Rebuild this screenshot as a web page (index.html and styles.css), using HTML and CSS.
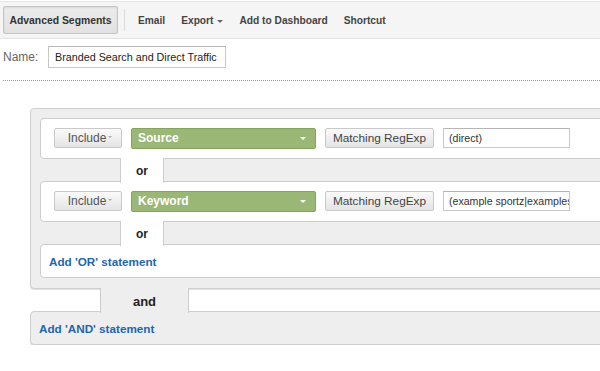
FILE: index.html
```html
<!DOCTYPE html>
<html>
<head>
<meta charset="utf-8">
<link rel="stylesheet" href="styles.css">
</head>
<body>
<div class="toolbar">
  <div class="seg-btn">Advanced Segments</div>
  <div class="sep"></div>
  <a class="tool">Email</a>
  <a class="tool">Export <span class="caret"></span></a>
  <a class="tool">Add to Dashboard</a>
  <a class="tool">Shortcut</a>
</div>
<div class="name-row">
  <span class="name-label">Name:</span>
  <div class="name-input">Branded Search and Direct Traffic</div>
</div>
<div class="dots"></div>
<div class="builder">
  <div class="or-group">
    <div class="cond">
      <div class="btn include">Include<span class="mini-caret"></span></div>
      <div class="dim">Source<span class="w-caret"></span></div>
      <div class="btn match">Matching RegExp</div>
      <div class="val">(direct)</div>
    </div>
    <div class="link"><div class="or-tab">or</div></div>
    <div class="cond">
      <div class="btn include">Include<span class="mini-caret"></span></div>
      <div class="dim">Keyword<span class="w-caret"></span></div>
      <div class="btn match">Matching RegExp</div>
      <div class="val">(example sportz|examples</div>
    </div>
    <div class="link"><div class="or-tab">or</div></div>
    <div class="add-or">Add 'OR' statement</div>
  </div>
  <div class="and-link"><div class="and-tab">and</div></div>
  <div class="add-and">Add 'AND' statement</div>
</div>
</body>
</html>
```
FILE: styles.css
```css
html, body {
  margin: 0;
  padding: 0;
  overflow: hidden;
  background: #fff;
  font-family: "Liberation Sans", Arial, sans-serif;
}

.toolbar {
  display: flex;
  align-items: center;
  height: 36px;
  margin-top: 1px;
  background: #f5f5f5;
  border-top: 1px solid #e6e6e6;
  border-bottom: 1px solid #e3e3e3;
  padding-left: 3px;
}

.seg-btn {
  box-sizing: border-box;
  width: 115px;
  height: 28px;
  display: flex;
  align-items: center;
  justify-content: center;
  background: linear-gradient(#ececec, #e2e2e2);
  border: 1px solid #c4c4c4;
  border-radius: 2px;
  box-shadow: inset 0 1px 2px rgba(0,0,0,0.08);
  font-size: 10.4px;
  font-weight: bold;
  color: #333;
}

.sep {
  width: 1px;
  height: 22px;
  background: #dadada;
  margin: 0 5px 0 6px;
}

.tool {
  font-size: 10.2px;
  font-weight: bold;
  color: #444;
  padding: 0 8px;
  display: flex;
  align-items: center;
}

.caret {
  display: inline-block;
  width: 0;
  height: 0;
  margin-left: 4px;
  margin-top: 2px;
  border-left: 3px solid transparent;
  border-right: 3px solid transparent;
  border-top: 3px solid #666;
}

.name-row {
  display: flex;
  align-items: center;
  padding: 7px 0 0 3px;
  height: 22px;
}

.name-label {
  font-size: 12px;
  color: #666;
  width: 45px;
}

.name-input {
  box-sizing: border-box;
  width: 178px;
  height: 22px;
  border: 1px solid #c8c8c8;
  border-top-color: #b8b8b8;
  padding-left: 6px;
  font-size: 10.75px;
  line-height: 20px;
  color: #222;
}

.dots {
  margin: 12px 0 0 3px;
  border-top: 1px dotted #9a9a9a;
}

.builder {
  margin: 27px 0 0 30px;
  width: 640px;
}

.or-group {
  background: #eeeeee;
  border: 1px solid #cfcfcf;
  border-radius: 4px;
  box-shadow: 0 1px 0 #e2e2e2;
  padding: 9px 0 10px 9px;
}

.cond {
  display: flex;
  align-items: center;
  gap: 9px;
  background: #fff;
  border: 1px solid #cccccc;
  border-radius: 4px;
  padding: 9px 13px 10px;
  height: 20px;
}

.btn {
  box-sizing: border-box;
  height: 20px;
  display: flex;
  align-items: center;
  justify-content: center;
  background: linear-gradient(#fafafa, #e4e4e4);
  border: 1px solid #c9c9c9;
  border-radius: 2px;
  font-size: 12px;
  color: #555;
}

.include {
  width: 68px;
  padding-left: 4px;
}

.mini-caret {
  display: inline-block;
  width: 0;
  height: 0;
  margin-left: 2px;
  margin-top: -3px;
  border-left: 2px solid transparent;
  border-right: 2px solid transparent;
  border-top: 2px solid #aaa;
}

.dim {
  box-sizing: border-box;
  width: 185px;
  height: 21px;
  display: flex;
  align-items: center;
  justify-content: space-between;
  background: #9bb775;
  border: 1px solid #86a260;
  border-radius: 2px;
  padding: 0 9px 0 6px;
  font-size: 12px;
  font-weight: bold;
  color: #fff;
}

.w-caret {
  width: 0;
  height: 0;
  border-left: 3px solid transparent;
  border-right: 3px solid transparent;
  border-top: 3px solid #fff;
}

.match {
  width: 109px;
  color: #444;
  font-size: 11.8px;
}

.val {
  box-sizing: border-box;
  width: 127px;
  height: 20px;
  border: 1px solid #c8c8c8;
  border-top-color: #b5b5b5;
  padding-left: 5px;
  font-size: 10.6px;
  line-height: 18px;
  color: #333;
  white-space: nowrap;
  overflow: hidden;
}

.link {
  height: 23px;
  padding-left: 80px;
}

.or-tab {
  position: relative;
  z-index: 1;
  box-sizing: border-box;
  width: 44px;
  height: 25px;
  margin-top: -1px;
  background: #fff;
  border-left: 1px solid #cccccc;
  border-right: 1px solid #cccccc;
  font-size: 12px;
  font-weight: bold;
  color: #222;
  display: flex;
  align-items: center;
  justify-content: center;
}

.add-or {
  height: 32px;
  background: #fff;
  border: 1px solid #cccccc;
  border-radius: 4px;
  padding-left: 8px;
  display: flex;
  align-items: center;
  font-size: 11.7px;
  font-weight: bold;
  color: #1f66ad;
}

.and-link {
  height: 23px;
  padding-left: 70px;
}

.and-tab {
  position: relative;
  z-index: 1;
  box-sizing: border-box;
  width: 89px;
  height: 25px;
  margin-top: -1px;
  padding-top: 2px;
  background: #eeeeee;
  border-left: 1px solid #cccccc;
  border-right: 1px solid #cccccc;
  font-size: 13px;
  font-weight: bold;
  color: #222;
  display: flex;
  align-items: center;
  justify-content: center;
}

.add-and {
  height: 32px;
  background: #eeeeee;
  border: 1px solid #cfcfcf;
  border-radius: 4px;
  box-shadow: 0 1px 0 #e2e2e2;
  padding-left: 8px;
  display: flex;
  align-items: center;
  font-size: 11.7px;
  font-weight: bold;
  color: #1f66ad;
}
```
